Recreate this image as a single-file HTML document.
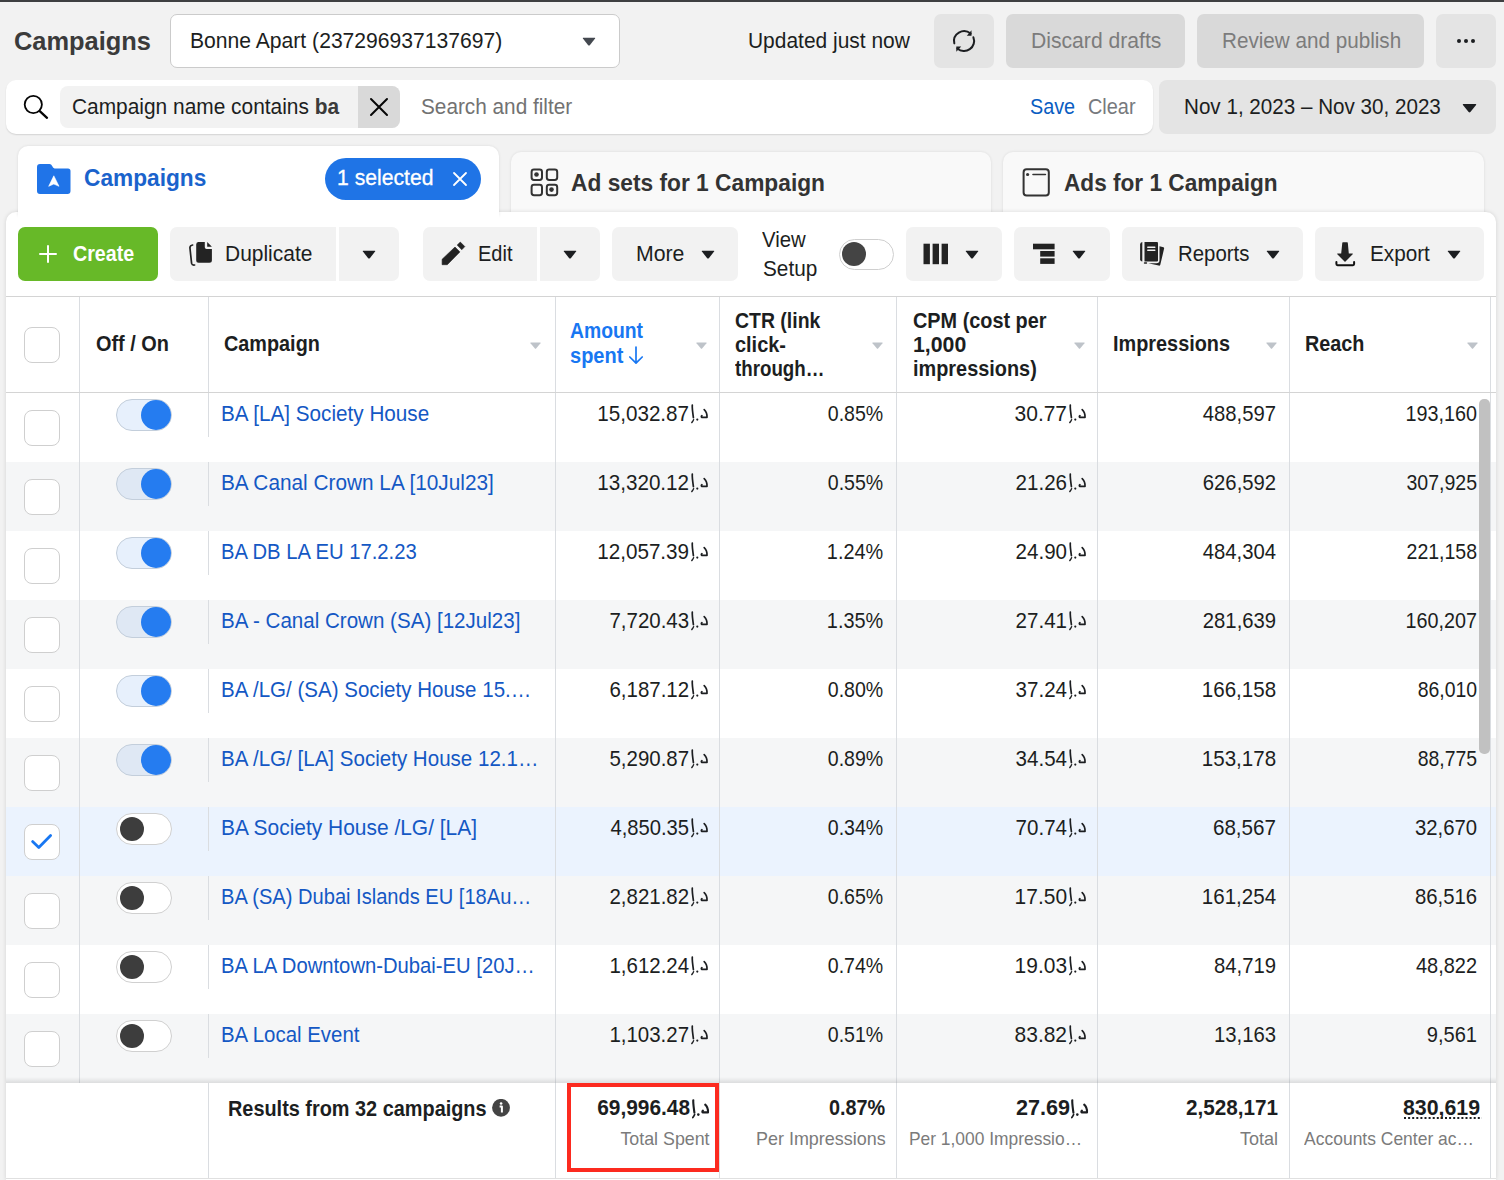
<!DOCTYPE html>
<html><head><meta charset="utf-8">
<style>
*{box-sizing:border-box;margin:0;padding:0}
html,body{width:1504px;height:1180px;overflow:hidden}
body{background:#f2f2f2;font-family:"Liberation Sans",sans-serif;color:#1c1e21;position:relative}
.a{position:absolute}
.t{position:absolute;white-space:nowrap;line-height:1}
</style></head>
<body>
<div class="a" style="left:0px;top:0px;width:1504px;height:2px;background:#3e3f41;border-radius:0px"></div>
<div id="taa25918f" class="t" style="top:28.07px;left:14.20px;font-size:26.5px;font-weight:bold;color:#3b3b3b;transform:scaleX(0.9590);transform-origin:left">Campaigns</div>
<div class="a" style="left:170px;top:14px;width:450px;height:54px;background:#fff;border-radius:7px;border:1px solid #cbcbcb"></div>
<div id="tb012c9fb" class="t" style="top:29.52px;left:189.50px;font-size:21.6px;font-weight:normal;color:#1c1e21;transform:scaleX(0.9779);transform-origin:left">Bonne Apart (237296937137697)</div>
<svg class="a" style="left:582px;top:37px" width="14" height="9" viewBox="0 0 14 9"><path d="M1.2 0.8 H12.8 Q13.6 0.8 13.1 1.6 L7.8 8.2 Q7 9 6.2 8.2 L0.9 1.6 Q0.4 0.8 1.2 0.8Z" fill="#444950"/></svg>
<div id="t24e36e07" class="t" style="top:29.52px;left:748.00px;font-size:21.6px;font-weight:normal;color:#1c1e21;transform:scaleX(0.9699);transform-origin:left">Updated just now</div>
<div class="a" style="left:934px;top:14px;width:60px;height:54px;background:#e4e4e4;border-radius:7px"></div>
<svg class="a" style="left:950px;top:27px" width="28" height="28" viewBox="0 0 28 28"><path d="M4.3 16.4 A10 10 0 0 1 20.6 6.6" stroke="#1c1e21" stroke-width="2" fill="none" stroke-linecap="round"/><path d="M23.4 10.3 A10 10 0 0 1 7.4 21.4" stroke="#1c1e21" stroke-width="2" fill="none" stroke-linecap="round"/><path d="M21.5 3.3 V8.7 H16.8 Z" fill="#1c1e21"/><path d="M6.3 24.8 V19.4 H11.2 Z" fill="#1c1e21"/></svg>
<div class="a" style="left:1006px;top:14px;width:179px;height:54px;background:#d9d9d9;border-radius:7px"></div>
<div id="tb65f2db2" class="t" style="top:29.62px;left:1030.70px;font-size:21.6px;font-weight:normal;color:#7c7c7c;transform:scaleX(0.9788);transform-origin:left">Discard drafts</div>
<div class="a" style="left:1197px;top:14px;width:227px;height:54px;background:#d9d9d9;border-radius:7px"></div>
<div id="te1158c4f" class="t" style="top:29.62px;left:1222.00px;font-size:21.6px;font-weight:normal;color:#7c7c7c;transform:scaleX(0.9568);transform-origin:left">Review and publish</div>
<div class="a" style="left:1436px;top:14px;width:60px;height:54px;background:#e4e4e4;border-radius:7px"></div>
<div class="a" style="left:1457px;top:39px;width:4px;height:4px;border-radius:2px;background:#1c1e21"></div>
<div class="a" style="left:1464px;top:39px;width:4px;height:4px;border-radius:2px;background:#1c1e21"></div>
<div class="a" style="left:1471px;top:39px;width:4px;height:4px;border-radius:2px;background:#1c1e21"></div>
<div class="a" style="left:6px;top:80px;width:1147px;height:54px;background:#fff;border-radius:10px;box-shadow:0 1px 1.5px rgba(0,0,0,0.13)"></div>
<svg class="a" style="left:20px;top:92px" width="32" height="30" viewBox="0 0 32 30"><circle cx="13.3" cy="12.5" r="8.6" stroke="#050505" stroke-width="1.8" fill="none"/><path d="M20 19.3 L27 25.8" stroke="#050505" stroke-width="2.3" stroke-linecap="round"/></svg>
<div class="a" style="left:60px;top:86px;width:340px;height:42px;background:#f2f2f2;border-radius:8px"></div>
<div class="a" style="left:358px;top:86px;width:42px;height:42px;background:#d9d9d9;border-radius:0 8px 8px 0"></div>
<svg class="a" style="left:368px;top:96px" width="22" height="22" viewBox="0 0 22 22"><path d="M3 3 L19 19 M19 3 L3 19" stroke="#050505" stroke-width="2" stroke-linecap="round"/></svg>
<div id="t584254b4" class="t" style="top:95.72px;left:72.40px;font-size:21.6px;font-weight:normal;color:#1c1e21;transform:scaleX(0.9674);transform-origin:left">Campaign name contains <b style="color:#3b3b3b">ba</b></div>
<div id="tb4aa1574" class="t" style="top:95.72px;left:421.00px;font-size:21.6px;font-weight:normal;color:#727272;transform:scaleX(0.9617);transform-origin:left">Search and filter</div>
<div id="ta5e28c8b" class="t" style="top:95.82px;left:1030.00px;font-size:21.6px;font-weight:normal;color:#0a5dc2;transform:scaleX(0.9167);transform-origin:left">Save</div>
<div id="t46871923" class="t" style="top:95.82px;left:1087.50px;font-size:21.6px;font-weight:normal;color:#76797d;transform:scaleX(0.9216);transform-origin:left">Clear</div>
<div class="a" style="left:1159px;top:80px;width:337px;height:54px;background:#e4e4e4;border-radius:8px"></div>
<div id="te5a3c46e" class="t" style="top:95.72px;left:1183.50px;font-size:21.6px;font-weight:normal;color:#1c1e21;transform:scaleX(0.9551);transform-origin:left">Nov 1, 2023 – Nov 30, 2023</div>
<svg class="a" style="left:1461.5px;top:102.5px" width="15" height="10" viewBox="0 0 14 9"><path d="M1.2 0.8 H12.8 Q13.6 0.8 13.1 1.6 L7.8 8.2 Q7 9 6.2 8.2 L0.9 1.6 Q0.4 0.8 1.2 0.8Z" fill="#1c1e21"/></svg>
<div class="a" style="left:511px;top:152px;width:480px;height:70px;background:#f9f9f9;border-radius:10px 10px 0 0;box-shadow:0 0 3px rgba(0,0,0,0.10)"></div>
<div class="a" style="left:1003px;top:152px;width:481px;height:70px;background:#f9f9f9;border-radius:10px 10px 0 0;box-shadow:0 0 3px rgba(0,0,0,0.10)"></div>
<div class="a" style="left:6px;top:212px;width:1490px;height:968px;background:#fff;border-radius:10px 10px 0 0;box-shadow:0 0 4px rgba(0,0,0,0.13)"></div>
<div class="a" style="left:18px;top:146px;width:481px;height:70px;background:#fff;border-radius:10px 10px 0 0;box-shadow:0 0 3px rgba(0,0,0,0.10)"></div>
<div class="a" style="left:18px;top:200px;width:481px;height:26px;background:#fff;border-radius:0px"></div>
<svg class="a" style="left:37px;top:164px" width="34" height="30" viewBox="0 0 34 30"><path d="M3 0 H12.5 Q14.3 0 15.2 2 L16 3.6 Q16.6 4.4 17.6 4.4 H31 Q33.5 4.4 33.5 7 V27 Q33.5 30 30.5 30 H3 Q0 30 0 27 V3 Q0 0 3 0Z" fill="#2074e8"/><path d="M16.8 11.8 L22 22.3 L16.8 20 L11.7 22.3Z" fill="#fff" stroke="#fff" stroke-width="0.6" stroke-linejoin="round"/></svg>
<div id="tc4a36402" class="t" style="top:166.38px;left:84.00px;font-size:24px;font-weight:bold;color:#1a63cc;transform:scaleX(0.9453);transform-origin:left">Campaigns</div>
<div class="a" style="left:325px;top:158px;width:156px;height:41.5px;background:#1f74e6;border-radius:21px"></div>
<div id="ta44075b0" class="t" style="top:167.32px;left:337.00px;font-size:21.6px;font-weight:normal;color:#fff;transform:scaleX(0.9797);transform-origin:left;-webkit-text-stroke:0.3px #fff">1 selected</div>
<svg class="a" style="left:451px;top:170px" width="18" height="18" viewBox="0 0 18 18"><path d="M3 3 L15 15 M15 3 L3 15" stroke="#fff" stroke-width="1.8" stroke-linecap="round"/></svg>
<svg class="a" style="left:528px;top:166px" width="32" height="32" viewBox="0 0 32 32"><rect x="3.6" y="3.6" width="10.4" height="10.4" rx="2.4" stroke="#333" stroke-width="2" fill="none"/><rect x="18.8" y="3.6" width="10.4" height="10.4" rx="2.4" stroke="#333" stroke-width="2" fill="none"/><rect x="3.6" y="18.8" width="10.4" height="10.4" rx="2.4" stroke="#333" stroke-width="2" fill="none"/><rect x="18.8" y="18.8" width="10.4" height="10.4" rx="2.4" stroke="#333" stroke-width="2" fill="none"/><circle cx="8.5" cy="8.5" r="2.3" fill="#333"/><circle cx="23.5" cy="23.6" r="2.3" fill="#333"/></svg>
<div id="t94a41b3c" class="t" style="top:170.68px;left:571.00px;font-size:24px;font-weight:bold;color:#333333;transform:scaleX(0.9476);transform-origin:left">Ad sets for 1 Campaign</div>
<svg class="a" style="left:1020px;top:166px" width="32" height="32" viewBox="0 0 32 32"><rect x="3.6" y="3.2" width="25.2" height="26.2" rx="3" stroke="#333" stroke-width="2" fill="none"/><circle cx="7.6" cy="8.5" r="1.6" fill="#333"/><path d="M13 8.5 H25.4" stroke="#333" stroke-width="1.6" stroke-linecap="round"/></svg>
<div id="tc7b79ae1" class="t" style="top:170.68px;left:1063.50px;font-size:24px;font-weight:bold;color:#333333;transform:scaleX(0.9423);transform-origin:left">Ads for 1 Campaign</div>
<div class="a" style="left:18px;top:227px;width:140px;height:54px;background:#67b928;border-radius:7px"></div>
<svg class="a" style="left:38px;top:244px" width="20" height="20" viewBox="0 0 20 20"><path d="M10 2 V18 M2 10 H18" stroke="#fff" stroke-width="2" stroke-linecap="round"/></svg>
<div id="t2d208cb6" class="t" style="top:242.62px;left:72.80px;font-size:21.6px;font-weight:bold;color:#fff;transform:scaleX(0.9104);transform-origin:left">Create</div>
<div class="a" style="left:170px;top:227px;width:166px;height:54px;background:#f2f2f2;border-radius:7px 0 0 7px"></div>
<div class="a" style="left:339px;top:227px;width:60px;height:54px;background:#f2f2f2;border-radius:0 7px 7px 0"></div>
<svg class="a" style="left:186px;top:240px" width="28" height="28" viewBox="0 0 28 28"><path d="M12.2 2 H18.8 V7.2 Q18.8 9 20.6 9 H25.9 V20.2 Q25.9 22.7 23.4 22.7 H12.7 Q10.2 22.7 10.2 20.2 V4.5 Q10.2 2 12.2 2Z" fill="#232323"/><path d="M21.2 2 L25.9 6.7 H21.2Z" fill="#232323"/><path d="M6.6 5 Q4.2 5.4 3.9 7.6 L5.6 23.4 Q6.1 25.4 8.6 25" stroke="#232323" stroke-width="1.7" fill="none" stroke-linecap="round"/></svg>
<div id="ta1fe7149" class="t" style="top:242.62px;left:225.40px;font-size:21.6px;font-weight:normal;color:#1c1e21;transform:scaleX(0.9708);transform-origin:left">Duplicate</div>
<svg class="a" style="left:362px;top:250px" width="14" height="9" viewBox="0 0 14 9"><path d="M1.2 0.8 H12.8 Q13.6 0.8 13.1 1.6 L7.8 8.2 Q7 9 6.2 8.2 L0.9 1.6 Q0.4 0.8 1.2 0.8Z" fill="#1c1e21"/></svg>
<div class="a" style="left:423px;top:227px;width:114px;height:54px;background:#f2f2f2;border-radius:7px 0 0 7px"></div>
<div class="a" style="left:540px;top:227px;width:60px;height:54px;background:#f2f2f2;border-radius:0 7px 7px 0"></div>
<svg class="a" style="left:440px;top:240px" width="28" height="28" viewBox="0 0 28 28"><path d="M2.1 19.3 L15 7 L19.9 11.9 L7.3 24.7 H2.1Z" fill="#232323" stroke="#232323" stroke-width="0.6" stroke-linejoin="round"/><path d="M20.3 2.1 L24.8 6.6 L21.8 9.7 L17.2 5.1Z" fill="#232323" stroke="#232323" stroke-width="0.6" stroke-linejoin="round"/></svg>
<div id="t60945b00" class="t" style="top:242.62px;left:478.00px;font-size:21.6px;font-weight:normal;color:#1c1e21;transform:scaleX(0.9260);transform-origin:left">Edit</div>
<svg class="a" style="left:562.6px;top:250px" width="14" height="9" viewBox="0 0 14 9"><path d="M1.2 0.8 H12.8 Q13.6 0.8 13.1 1.6 L7.8 8.2 Q7 9 6.2 8.2 L0.9 1.6 Q0.4 0.8 1.2 0.8Z" fill="#1c1e21"/></svg>
<div class="a" style="left:612px;top:227px;width:125.5px;height:54px;background:#f2f2f2;border-radius:7px"></div>
<div id="tb323ca93" class="t" style="top:242.62px;left:636.00px;font-size:21.6px;font-weight:normal;color:#1c1e21;transform:scaleX(0.9844);transform-origin:left">More</div>
<svg class="a" style="left:700.5px;top:250px" width="14" height="9" viewBox="0 0 14 9"><path d="M1.2 0.8 H12.8 Q13.6 0.8 13.1 1.6 L7.8 8.2 Q7 9 6.2 8.2 L0.9 1.6 Q0.4 0.8 1.2 0.8Z" fill="#1c1e21"/></svg>
<div id="tbd871097" class="t" style="top:228.72px;left:762.20px;font-size:21.6px;font-weight:normal;color:#1c1e21;transform:scaleX(0.9414);transform-origin:left">View</div>
<div id="t5d36d2b4" class="t" style="top:258.22px;left:762.50px;font-size:21.6px;font-weight:normal;color:#1c1e21;transform:scaleX(0.9617);transform-origin:left">Setup</div>
<div class="a" style="left:838.5px;top:238.5px;width:55px;height:31px;border-radius:16px;background:#fff;border:1px solid #cfcfcf"></div>
<div class="a" style="left:842px;top:242px;width:24px;height:24px;border-radius:12px;background:#444"></div>
<div class="a" style="left:906px;top:227px;width:95.5px;height:54px;background:#f2f2f2;border-radius:7px"></div>
<svg class="a" style="left:923px;top:243px" width="26" height="22" viewBox="0 0 26 22"><rect x="0.5" y="0.7" width="6.4" height="20.5" fill="#232323"/><rect x="9.6" y="0.7" width="6.4" height="20.5" fill="#232323"/><rect x="18.6" y="0.7" width="6.4" height="20.5" fill="#232323"/></svg>
<svg class="a" style="left:965px;top:250px" width="14" height="9" viewBox="0 0 14 9"><path d="M1.2 0.8 H12.8 Q13.6 0.8 13.1 1.6 L7.8 8.2 Q7 9 6.2 8.2 L0.9 1.6 Q0.4 0.8 1.2 0.8Z" fill="#1c1e21"/></svg>
<div class="a" style="left:1014px;top:227px;width:95.5px;height:54px;background:#f2f2f2;border-radius:7px"></div>
<svg class="a" style="left:1032px;top:243px" width="24" height="22" viewBox="0 0 24 22"><rect x="1" y="0.7" width="21.6" height="5.6" fill="#232323"/><rect x="8.2" y="8" width="14.4" height="5.6" fill="#232323"/><rect x="8.2" y="15.3" width="14.4" height="5.6" fill="#232323"/></svg>
<svg class="a" style="left:1072px;top:250px" width="14" height="9" viewBox="0 0 14 9"><path d="M1.2 0.8 H12.8 Q13.6 0.8 13.1 1.6 L7.8 8.2 Q7 9 6.2 8.2 L0.9 1.6 Q0.4 0.8 1.2 0.8Z" fill="#1c1e21"/></svg>
<div class="a" style="left:1122px;top:227px;width:181px;height:54px;background:#f2f2f2;border-radius:7px"></div>
<svg class="a" style="left:1136px;top:238px" width="30" height="30" viewBox="0 0 30 30"><path d="M6.3 4 V23.5 Q4.3 23.3 4.1 21.4 V6.2 Q4.3 4.2 6.3 4Z" fill="#232323"/><path d="M8.5 4 H21 Q22 4 22 5.2 V22.5 Q22 23.5 21 23.5 H8.5Z" fill="#232323"/><path d="M11.8 9.3 H18.8 M11.8 12.2 H18.8" stroke="#f2f2f2" stroke-width="1.5" stroke-linecap="round"/><path d="M23.5 8.2 L27.5 9.2 Q28.4 9.6 28.1 10.6 L24.3 26.8 Q23.8 27.9 22.7 27.6 L12.2 25.3 H20.5 Q23.5 25.3 23.5 22.3Z" fill="#232323"/><path d="M8.5 25 H10.5" stroke="#232323" stroke-width="1.4" stroke-linecap="round"/></svg>
<div id="tfb6ac328" class="t" style="top:242.62px;left:1177.60px;font-size:21.6px;font-weight:normal;color:#1c1e21;transform:scaleX(0.9437);transform-origin:left">Reports</div>
<svg class="a" style="left:1266px;top:250px" width="14" height="9" viewBox="0 0 14 9"><path d="M1.2 0.8 H12.8 Q13.6 0.8 13.1 1.6 L7.8 8.2 Q7 9 6.2 8.2 L0.9 1.6 Q0.4 0.8 1.2 0.8Z" fill="#1c1e21"/></svg>
<div class="a" style="left:1315px;top:227px;width:169px;height:54px;background:#f2f2f2;border-radius:7px"></div>
<svg class="a" style="left:1332px;top:238px" width="26" height="30" viewBox="0 0 26 30"><path d="M10.9 4.2 H15.2 Q15.7 4.2 15.8 4.8 L16.8 15.5 H20.4 Q21.2 15.6 20.7 16.3 L13.5 23.5 Q13 24 12.5 23.5 L5.3 16.3 Q4.8 15.6 5.6 15.5 H9.2 L10.3 4.8 Q10.4 4.2 10.9 4.2Z" fill="#232323"/><path d="M4.4 23.9 V26.1 Q4.4 27.2 5.5 27.2 H21 Q22.1 27.2 22.1 26.1 V23.9" stroke="#111" stroke-width="2" fill="none" stroke-linecap="round"/></svg>
<div id="t9ee970e2" class="t" style="top:242.62px;left:1370.00px;font-size:21.6px;font-weight:normal;color:#1c1e21;transform:scaleX(0.9588);transform-origin:left">Export</div>
<svg class="a" style="left:1447px;top:250px" width="14" height="9" viewBox="0 0 14 9"><path d="M1.2 0.8 H12.8 Q13.6 0.8 13.1 1.6 L7.8 8.2 Q7 9 6.2 8.2 L0.9 1.6 Q0.4 0.8 1.2 0.8Z" fill="#1c1e21"/></svg>
<div class="a" style="left:6px;top:296px;width:1490px;height:1px;background:#d4d4d4;border-radius:0px"></div>
<div class="a" style="left:6px;top:392px;width:1490px;height:1px;background:#d4d4d4;border-radius:0px"></div>
<div class="a" style="left:79px;top:297px;width:1px;height:95px;background:#dadde1;border-radius:0px"></div>
<div class="a" style="left:208px;top:297px;width:1px;height:95px;background:#dadde1;border-radius:0px"></div>
<div class="a" style="left:555px;top:297px;width:1px;height:95px;background:#dadde1;border-radius:0px"></div>
<div class="a" style="left:719px;top:297px;width:1px;height:95px;background:#dadde1;border-radius:0px"></div>
<div class="a" style="left:896px;top:297px;width:1px;height:95px;background:#dadde1;border-radius:0px"></div>
<div class="a" style="left:1097px;top:297px;width:1px;height:95px;background:#dadde1;border-radius:0px"></div>
<div class="a" style="left:1289px;top:297px;width:1px;height:95px;background:#dadde1;border-radius:0px"></div>
<div class="a" style="left:1490px;top:297px;width:1px;height:95px;background:#dadde1;border-radius:0px"></div>
<div class="a" style="left:24.2px;top:327px;width:35.5px;height:35.5px;border-radius:8px;background:#fff;border:1px solid #cfcfcf"></div>
<div id="t915b5547" class="t" style="top:334.20px;left:95.80px;font-size:21.5px;font-weight:bold;color:#1c1e21;transform:scaleX(0.9260);transform-origin:left">Off / On</div>
<div id="tcd2b1657" class="t" style="top:334.40px;left:224.00px;font-size:21.5px;font-weight:bold;color:#1c1e21;transform:scaleX(0.9223);transform-origin:left">Campaign</div>
<svg class="a" style="left:530px;top:342.3px" width="11" height="7" viewBox="0 0 11 7"><path d="M0.8 0.5 H10.2 Q11 0.5 10.5 1.2 L6.1 6.4 Q5.5 7 4.9 6.4 L0.5 1.2 Q0 0.5 0.8 0.5Z" fill="#bec3c9"/></svg>
<div id="ta868b68b" class="t" style="top:320.90px;left:570.30px;font-size:21.5px;font-weight:bold;color:#1877f2;transform:scaleX(0.8992);transform-origin:left">Amount</div>
<div id="t5782e64c" class="t" style="top:345.50px;left:570.30px;font-size:21.5px;font-weight:bold;color:#1877f2;transform:scaleX(0.9308);transform-origin:left">spent</div>
<svg class="a" style="left:627.5px;top:346px" width="16" height="19" viewBox="0 0 16 19"><path d="M8 1 V17 M1.8 11 L8 17.2 L14.2 11" stroke="#1877f2" stroke-width="1.7" fill="none" stroke-linecap="round" stroke-linejoin="round"/></svg>
<svg class="a" style="left:695.9px;top:342.3px" width="11" height="7" viewBox="0 0 11 7"><path d="M0.8 0.5 H10.2 Q11 0.5 10.5 1.2 L6.1 6.4 Q5.5 7 4.9 6.4 L0.5 1.2 Q0 0.5 0.8 0.5Z" fill="#bec3c9"/></svg>
<div id="t7d94825a" class="t" style="top:311.00px;left:735.30px;font-size:21.5px;font-weight:bold;color:#1c1e21;transform:scaleX(0.9044);transform-origin:left">CTR (link</div>
<div id="t5403bf91" class="t" style="top:335.00px;left:735.30px;font-size:21.5px;font-weight:bold;color:#1c1e21;transform:scaleX(0.9263);transform-origin:left">click-</div>
<div id="t73893766" class="t" style="top:358.60px;left:735.30px;font-size:21.5px;font-weight:bold;color:#1c1e21;transform:scaleX(0.8713);transform-origin:left">through…</div>
<svg class="a" style="left:872px;top:342.3px" width="11" height="7" viewBox="0 0 11 7"><path d="M0.8 0.5 H10.2 Q11 0.5 10.5 1.2 L6.1 6.4 Q5.5 7 4.9 6.4 L0.5 1.2 Q0 0.5 0.8 0.5Z" fill="#bec3c9"/></svg>
<div id="ta5e9a7d2" class="t" style="top:311.00px;left:912.50px;font-size:21.5px;font-weight:bold;color:#1c1e21;transform:scaleX(0.9237);transform-origin:left">CPM (cost per</div>
<div id="t007a6642" class="t" style="top:335.00px;left:912.50px;font-size:21.5px;font-weight:bold;color:#1c1e21;transform:scaleX(0.9899);transform-origin:left">1,000</div>
<div id="t1e9acbd8" class="t" style="top:358.60px;left:912.50px;font-size:21.5px;font-weight:bold;color:#1c1e21;transform:scaleX(0.9249);transform-origin:left">impressions)</div>
<svg class="a" style="left:1073.5px;top:342.3px" width="11" height="7" viewBox="0 0 11 7"><path d="M0.8 0.5 H10.2 Q11 0.5 10.5 1.2 L6.1 6.4 Q5.5 7 4.9 6.4 L0.5 1.2 Q0 0.5 0.8 0.5Z" fill="#bec3c9"/></svg>
<div id="t10adb4b2" class="t" style="top:334.00px;left:1113.40px;font-size:21.5px;font-weight:bold;color:#1c1e21;transform:scaleX(0.9240);transform-origin:left">Impressions</div>
<svg class="a" style="left:1265.5px;top:342.3px" width="11" height="7" viewBox="0 0 11 7"><path d="M0.8 0.5 H10.2 Q11 0.5 10.5 1.2 L6.1 6.4 Q5.5 7 4.9 6.4 L0.5 1.2 Q0 0.5 0.8 0.5Z" fill="#bec3c9"/></svg>
<div id="t9f319165" class="t" style="top:334.00px;left:1305.00px;font-size:21.5px;font-weight:bold;color:#1c1e21;transform:scaleX(0.9206);transform-origin:left">Reach</div>
<svg class="a" style="left:1466.5px;top:342.3px" width="11" height="7" viewBox="0 0 11 7"><path d="M0.8 0.5 H10.2 Q11 0.5 10.5 1.2 L6.1 6.4 Q5.5 7 4.9 6.4 L0.5 1.2 Q0 0.5 0.8 0.5Z" fill="#bec3c9"/></svg>
<div class="a" style="left:6px;top:393px;width:1490px;height:69px;background:#ffffff;border-radius:0px"></div>
<div class="a" style="left:79px;top:393px;width:1px;height:69px;background:#dadde1;border-radius:0px"></div>
<div class="a" style="left:208px;top:393px;width:1px;height:44px;background:#dadde1;border-radius:0px"></div>
<div class="a" style="left:555px;top:393px;width:1px;height:69px;background:#dadde1;border-radius:0px"></div>
<div class="a" style="left:719px;top:393px;width:1px;height:69px;background:#dadde1;border-radius:0px"></div>
<div class="a" style="left:896px;top:393px;width:1px;height:69px;background:#dadde1;border-radius:0px"></div>
<div class="a" style="left:1097px;top:393px;width:1px;height:69px;background:#dadde1;border-radius:0px"></div>
<div class="a" style="left:1289px;top:393px;width:1px;height:69px;background:#dadde1;border-radius:0px"></div>
<div class="a" style="left:1490px;top:393px;width:1px;height:69px;background:#dadde1;border-radius:0px"></div>
<div class="a" style="left:24.2px;top:410px;width:35.5px;height:35.5px;border-radius:8px;background:#fff;border:1px solid #cfcfcf"></div>
<div class="a" style="left:116px;top:399px;width:55.5px;height:31.5px;border-radius:16px;background:#e7f0fc;border:1px solid #c3cedb"></div>
<div class="a" style="left:141px;top:399.5px;width:30px;height:30px;border-radius:15px;background:#257cf0"></div>
<div id="t7497a904" class="t" style="top:402.72px;left:221.00px;font-size:21.6px;font-weight:normal;color:#1458c4;transform:scaleX(0.9583);transform-origin:left">BA [LA] Society House</div>
<div id="t41259e73" class="t" style="top:402.72px;right:814.80px;font-size:21.6px;font-weight:normal;color:#1c1e21;transform:scaleX(0.9561);transform-origin:right">15,032.87</div>
<svg class="a" style="left:690.5px;top:404.0px" width="18" height="22" viewBox="0 0 18 22"><path d="M1.3 1.2 C1.1 3 1.6 8 2.4 13.6" stroke="#1c1e21" stroke-width="1.7" fill="none" stroke-linecap="round"/><path d="M2.6 15.6 C2.2 16.8 1.5 17.6 0.8 18.6" stroke="#1c1e21" stroke-width="1.4" fill="none" stroke-linecap="round"/><circle cx="6.3" cy="15.6" r="1.1" fill="#1c1e21"/><path d="M13.2 5.6 C15.4 7.6 16.2 10 16 13.4 L10.6 13.4 C10.2 12.8 10.3 12 10.9 11.6" stroke="#1c1e21" stroke-width="1.7" fill="none" stroke-linecap="round" stroke-linejoin="round"/></svg>
<div id="t2dbe47bd" class="t" style="top:402.72px;right:621.00px;font-size:21.6px;font-weight:normal;color:#1c1e21;transform:scaleX(0.9055);transform-origin:right">0.85%</div>
<div id="t10940870" class="t" style="top:402.72px;right:436.70px;font-size:21.6px;font-weight:normal;color:#1c1e21;transform:scaleX(0.9713);transform-origin:right">30.77</div>
<svg class="a" style="left:1068.5px;top:404.0px" width="18" height="22" viewBox="0 0 18 22"><path d="M1.3 1.2 C1.1 3 1.6 8 2.4 13.6" stroke="#1c1e21" stroke-width="1.7" fill="none" stroke-linecap="round"/><path d="M2.6 15.6 C2.2 16.8 1.5 17.6 0.8 18.6" stroke="#1c1e21" stroke-width="1.4" fill="none" stroke-linecap="round"/><circle cx="6.3" cy="15.6" r="1.1" fill="#1c1e21"/><path d="M13.2 5.6 C15.4 7.6 16.2 10 16 13.4 L10.6 13.4 C10.2 12.8 10.3 12 10.9 11.6" stroke="#1c1e21" stroke-width="1.7" fill="none" stroke-linecap="round" stroke-linejoin="round"/></svg>
<div id="td9ce9e4d" class="t" style="top:402.72px;right:227.60px;font-size:21.6px;font-weight:normal;color:#1c1e21;transform:scaleX(0.9389);transform-origin:right">488,597</div>
<div id="te6055fb4" class="t" style="top:402.72px;right:27.00px;font-size:21.6px;font-weight:normal;color:#1c1e21;transform:scaleX(0.9154);transform-origin:right">193,160</div>
<div class="a" style="left:6px;top:462px;width:1490px;height:69px;background:#f5f6f7;border-radius:0px"></div>
<div class="a" style="left:79px;top:462px;width:1px;height:69px;background:#dadde1;border-radius:0px"></div>
<div class="a" style="left:208px;top:462px;width:1px;height:44px;background:#dadde1;border-radius:0px"></div>
<div class="a" style="left:555px;top:462px;width:1px;height:69px;background:#dadde1;border-radius:0px"></div>
<div class="a" style="left:719px;top:462px;width:1px;height:69px;background:#dadde1;border-radius:0px"></div>
<div class="a" style="left:896px;top:462px;width:1px;height:69px;background:#dadde1;border-radius:0px"></div>
<div class="a" style="left:1097px;top:462px;width:1px;height:69px;background:#dadde1;border-radius:0px"></div>
<div class="a" style="left:1289px;top:462px;width:1px;height:69px;background:#dadde1;border-radius:0px"></div>
<div class="a" style="left:1490px;top:462px;width:1px;height:69px;background:#dadde1;border-radius:0px"></div>
<div class="a" style="left:24.2px;top:479px;width:35.5px;height:35.5px;border-radius:8px;background:#fff;border:1px solid #cfcfcf"></div>
<div class="a" style="left:116px;top:468px;width:55.5px;height:31.5px;border-radius:16px;background:#dfe8f4;border:1px solid #c3cedb"></div>
<div class="a" style="left:141px;top:468.5px;width:30px;height:30px;border-radius:15px;background:#257cf0"></div>
<div id="tebf5dec6" class="t" style="top:471.72px;left:221.00px;font-size:21.6px;font-weight:normal;color:#1458c4;transform:scaleX(0.9630);transform-origin:left">BA Canal Crown LA [10Jul23]</div>
<div id="te239441a" class="t" style="top:471.72px;right:814.80px;font-size:21.6px;font-weight:normal;color:#1c1e21;transform:scaleX(0.9561);transform-origin:right">13,320.12</div>
<svg class="a" style="left:690.5px;top:473.0px" width="18" height="22" viewBox="0 0 18 22"><path d="M1.3 1.2 C1.1 3 1.6 8 2.4 13.6" stroke="#1c1e21" stroke-width="1.7" fill="none" stroke-linecap="round"/><path d="M2.6 15.6 C2.2 16.8 1.5 17.6 0.8 18.6" stroke="#1c1e21" stroke-width="1.4" fill="none" stroke-linecap="round"/><circle cx="6.3" cy="15.6" r="1.1" fill="#1c1e21"/><path d="M13.2 5.6 C15.4 7.6 16.2 10 16 13.4 L10.6 13.4 C10.2 12.8 10.3 12 10.9 11.6" stroke="#1c1e21" stroke-width="1.7" fill="none" stroke-linecap="round" stroke-linejoin="round"/></svg>
<div id="t305c2749" class="t" style="top:471.72px;right:621.00px;font-size:21.6px;font-weight:normal;color:#1c1e21;transform:scaleX(0.9055);transform-origin:right">0.55%</div>
<div id="tcc970a7a" class="t" style="top:471.72px;right:436.70px;font-size:21.6px;font-weight:normal;color:#1c1e21;transform:scaleX(0.9515);transform-origin:right">21.26</div>
<svg class="a" style="left:1068.5px;top:473.0px" width="18" height="22" viewBox="0 0 18 22"><path d="M1.3 1.2 C1.1 3 1.6 8 2.4 13.6" stroke="#1c1e21" stroke-width="1.7" fill="none" stroke-linecap="round"/><path d="M2.6 15.6 C2.2 16.8 1.5 17.6 0.8 18.6" stroke="#1c1e21" stroke-width="1.4" fill="none" stroke-linecap="round"/><circle cx="6.3" cy="15.6" r="1.1" fill="#1c1e21"/><path d="M13.2 5.6 C15.4 7.6 16.2 10 16 13.4 L10.6 13.4 C10.2 12.8 10.3 12 10.9 11.6" stroke="#1c1e21" stroke-width="1.7" fill="none" stroke-linecap="round" stroke-linejoin="round"/></svg>
<div id="t8bf44b84" class="t" style="top:471.72px;right:227.60px;font-size:21.6px;font-weight:normal;color:#1c1e21;transform:scaleX(0.9382);transform-origin:right">626,592</div>
<div id="t05a96a99" class="t" style="top:471.72px;right:27.00px;font-size:21.6px;font-weight:normal;color:#1c1e21;transform:scaleX(0.9041);transform-origin:right">307,925</div>
<div class="a" style="left:6px;top:531px;width:1490px;height:69px;background:#ffffff;border-radius:0px"></div>
<div class="a" style="left:79px;top:531px;width:1px;height:69px;background:#dadde1;border-radius:0px"></div>
<div class="a" style="left:208px;top:531px;width:1px;height:44px;background:#dadde1;border-radius:0px"></div>
<div class="a" style="left:555px;top:531px;width:1px;height:69px;background:#dadde1;border-radius:0px"></div>
<div class="a" style="left:719px;top:531px;width:1px;height:69px;background:#dadde1;border-radius:0px"></div>
<div class="a" style="left:896px;top:531px;width:1px;height:69px;background:#dadde1;border-radius:0px"></div>
<div class="a" style="left:1097px;top:531px;width:1px;height:69px;background:#dadde1;border-radius:0px"></div>
<div class="a" style="left:1289px;top:531px;width:1px;height:69px;background:#dadde1;border-radius:0px"></div>
<div class="a" style="left:1490px;top:531px;width:1px;height:69px;background:#dadde1;border-radius:0px"></div>
<div class="a" style="left:24.2px;top:548px;width:35.5px;height:35.5px;border-radius:8px;background:#fff;border:1px solid #cfcfcf"></div>
<div class="a" style="left:116px;top:537px;width:55.5px;height:31.5px;border-radius:16px;background:#e7f0fc;border:1px solid #c3cedb"></div>
<div class="a" style="left:141px;top:537.5px;width:30px;height:30px;border-radius:15px;background:#257cf0"></div>
<div id="t596648ef" class="t" style="top:540.72px;left:221.00px;font-size:21.6px;font-weight:normal;color:#1458c4;transform:scaleX(0.9372);transform-origin:left">BA DB LA EU 17.2.23</div>
<div id="t68496ca8" class="t" style="top:540.72px;right:814.80px;font-size:21.6px;font-weight:normal;color:#1c1e21;transform:scaleX(0.9561);transform-origin:right">12,057.39</div>
<svg class="a" style="left:690.5px;top:542.0px" width="18" height="22" viewBox="0 0 18 22"><path d="M1.3 1.2 C1.1 3 1.6 8 2.4 13.6" stroke="#1c1e21" stroke-width="1.7" fill="none" stroke-linecap="round"/><path d="M2.6 15.6 C2.2 16.8 1.5 17.6 0.8 18.6" stroke="#1c1e21" stroke-width="1.4" fill="none" stroke-linecap="round"/><circle cx="6.3" cy="15.6" r="1.1" fill="#1c1e21"/><path d="M13.2 5.6 C15.4 7.6 16.2 10 16 13.4 L10.6 13.4 C10.2 12.8 10.3 12 10.9 11.6" stroke="#1c1e21" stroke-width="1.7" fill="none" stroke-linecap="round" stroke-linejoin="round"/></svg>
<div id="t34c2289a" class="t" style="top:540.72px;right:621.00px;font-size:21.6px;font-weight:normal;color:#1c1e21;transform:scaleX(0.9206);transform-origin:right">1.24%</div>
<div id="tcefb7c2c" class="t" style="top:540.72px;right:436.70px;font-size:21.6px;font-weight:normal;color:#1c1e21;transform:scaleX(0.9515);transform-origin:right">24.90</div>
<svg class="a" style="left:1068.5px;top:542.0px" width="18" height="22" viewBox="0 0 18 22"><path d="M1.3 1.2 C1.1 3 1.6 8 2.4 13.6" stroke="#1c1e21" stroke-width="1.7" fill="none" stroke-linecap="round"/><path d="M2.6 15.6 C2.2 16.8 1.5 17.6 0.8 18.6" stroke="#1c1e21" stroke-width="1.4" fill="none" stroke-linecap="round"/><circle cx="6.3" cy="15.6" r="1.1" fill="#1c1e21"/><path d="M13.2 5.6 C15.4 7.6 16.2 10 16 13.4 L10.6 13.4 C10.2 12.8 10.3 12 10.9 11.6" stroke="#1c1e21" stroke-width="1.7" fill="none" stroke-linecap="round" stroke-linejoin="round"/></svg>
<div id="t62e4e837" class="t" style="top:540.72px;right:227.60px;font-size:21.6px;font-weight:normal;color:#1c1e21;transform:scaleX(0.9389);transform-origin:right">484,304</div>
<div id="t8b2350da" class="t" style="top:540.72px;right:27.00px;font-size:21.6px;font-weight:normal;color:#1c1e21;transform:scaleX(0.9030);transform-origin:right">221,158</div>
<div class="a" style="left:6px;top:600px;width:1490px;height:69px;background:#f5f6f7;border-radius:0px"></div>
<div class="a" style="left:79px;top:600px;width:1px;height:69px;background:#dadde1;border-radius:0px"></div>
<div class="a" style="left:208px;top:600px;width:1px;height:44px;background:#dadde1;border-radius:0px"></div>
<div class="a" style="left:555px;top:600px;width:1px;height:69px;background:#dadde1;border-radius:0px"></div>
<div class="a" style="left:719px;top:600px;width:1px;height:69px;background:#dadde1;border-radius:0px"></div>
<div class="a" style="left:896px;top:600px;width:1px;height:69px;background:#dadde1;border-radius:0px"></div>
<div class="a" style="left:1097px;top:600px;width:1px;height:69px;background:#dadde1;border-radius:0px"></div>
<div class="a" style="left:1289px;top:600px;width:1px;height:69px;background:#dadde1;border-radius:0px"></div>
<div class="a" style="left:1490px;top:600px;width:1px;height:69px;background:#dadde1;border-radius:0px"></div>
<div class="a" style="left:24.2px;top:617px;width:35.5px;height:35.5px;border-radius:8px;background:#fff;border:1px solid #cfcfcf"></div>
<div class="a" style="left:116px;top:606px;width:55.5px;height:31.5px;border-radius:16px;background:#dfe8f4;border:1px solid #c3cedb"></div>
<div class="a" style="left:141px;top:606.5px;width:30px;height:30px;border-radius:15px;background:#257cf0"></div>
<div id="t31a012fe" class="t" style="top:609.72px;left:221.00px;font-size:21.6px;font-weight:normal;color:#1458c4;transform:scaleX(0.9521);transform-origin:left">BA - Canal Crown (SA) [12Jul23]</div>
<div id="t85fae5a9" class="t" style="top:609.72px;right:814.80px;font-size:21.6px;font-weight:normal;color:#1c1e21;transform:scaleX(0.9471);transform-origin:right">7,720.43</div>
<svg class="a" style="left:690.5px;top:611.0px" width="18" height="22" viewBox="0 0 18 22"><path d="M1.3 1.2 C1.1 3 1.6 8 2.4 13.6" stroke="#1c1e21" stroke-width="1.7" fill="none" stroke-linecap="round"/><path d="M2.6 15.6 C2.2 16.8 1.5 17.6 0.8 18.6" stroke="#1c1e21" stroke-width="1.4" fill="none" stroke-linecap="round"/><circle cx="6.3" cy="15.6" r="1.1" fill="#1c1e21"/><path d="M13.2 5.6 C15.4 7.6 16.2 10 16 13.4 L10.6 13.4 C10.2 12.8 10.3 12 10.9 11.6" stroke="#1c1e21" stroke-width="1.7" fill="none" stroke-linecap="round" stroke-linejoin="round"/></svg>
<div id="tf061c42d" class="t" style="top:609.72px;right:621.00px;font-size:21.6px;font-weight:normal;color:#1c1e21;transform:scaleX(0.9206);transform-origin:right">1.35%</div>
<div id="t401b7467" class="t" style="top:609.72px;right:436.70px;font-size:21.6px;font-weight:normal;color:#1c1e21;transform:scaleX(0.9515);transform-origin:right">27.41</div>
<svg class="a" style="left:1068.5px;top:611.0px" width="18" height="22" viewBox="0 0 18 22"><path d="M1.3 1.2 C1.1 3 1.6 8 2.4 13.6" stroke="#1c1e21" stroke-width="1.7" fill="none" stroke-linecap="round"/><path d="M2.6 15.6 C2.2 16.8 1.5 17.6 0.8 18.6" stroke="#1c1e21" stroke-width="1.4" fill="none" stroke-linecap="round"/><circle cx="6.3" cy="15.6" r="1.1" fill="#1c1e21"/><path d="M13.2 5.6 C15.4 7.6 16.2 10 16 13.4 L10.6 13.4 C10.2 12.8 10.3 12 10.9 11.6" stroke="#1c1e21" stroke-width="1.7" fill="none" stroke-linecap="round" stroke-linejoin="round"/></svg>
<div id="tcf1b27c0" class="t" style="top:609.72px;right:227.60px;font-size:21.6px;font-weight:normal;color:#1c1e21;transform:scaleX(0.9382);transform-origin:right">281,639</div>
<div id="t333b4a50" class="t" style="top:609.72px;right:27.00px;font-size:21.6px;font-weight:normal;color:#1c1e21;transform:scaleX(0.9154);transform-origin:right">160,207</div>
<div class="a" style="left:6px;top:669px;width:1490px;height:69px;background:#ffffff;border-radius:0px"></div>
<div class="a" style="left:79px;top:669px;width:1px;height:69px;background:#dadde1;border-radius:0px"></div>
<div class="a" style="left:208px;top:669px;width:1px;height:44px;background:#dadde1;border-radius:0px"></div>
<div class="a" style="left:555px;top:669px;width:1px;height:69px;background:#dadde1;border-radius:0px"></div>
<div class="a" style="left:719px;top:669px;width:1px;height:69px;background:#dadde1;border-radius:0px"></div>
<div class="a" style="left:896px;top:669px;width:1px;height:69px;background:#dadde1;border-radius:0px"></div>
<div class="a" style="left:1097px;top:669px;width:1px;height:69px;background:#dadde1;border-radius:0px"></div>
<div class="a" style="left:1289px;top:669px;width:1px;height:69px;background:#dadde1;border-radius:0px"></div>
<div class="a" style="left:1490px;top:669px;width:1px;height:69px;background:#dadde1;border-radius:0px"></div>
<div class="a" style="left:24.2px;top:686px;width:35.5px;height:35.5px;border-radius:8px;background:#fff;border:1px solid #cfcfcf"></div>
<div class="a" style="left:116px;top:675px;width:55.5px;height:31.5px;border-radius:16px;background:#e7f0fc;border:1px solid #c3cedb"></div>
<div class="a" style="left:141px;top:675.5px;width:30px;height:30px;border-radius:15px;background:#257cf0"></div>
<div id="t3ba3d7cb" class="t" style="top:678.72px;left:221.00px;font-size:21.6px;font-weight:normal;color:#1458c4;transform:scaleX(0.9505);transform-origin:left">BA /LG/ (SA) Society House 15.…</div>
<div id="tfa165b82" class="t" style="top:678.72px;right:814.80px;font-size:21.6px;font-weight:normal;color:#1c1e21;transform:scaleX(0.9471);transform-origin:right">6,187.12</div>
<svg class="a" style="left:690.5px;top:680.0px" width="18" height="22" viewBox="0 0 18 22"><path d="M1.3 1.2 C1.1 3 1.6 8 2.4 13.6" stroke="#1c1e21" stroke-width="1.7" fill="none" stroke-linecap="round"/><path d="M2.6 15.6 C2.2 16.8 1.5 17.6 0.8 18.6" stroke="#1c1e21" stroke-width="1.4" fill="none" stroke-linecap="round"/><circle cx="6.3" cy="15.6" r="1.1" fill="#1c1e21"/><path d="M13.2 5.6 C15.4 7.6 16.2 10 16 13.4 L10.6 13.4 C10.2 12.8 10.3 12 10.9 11.6" stroke="#1c1e21" stroke-width="1.7" fill="none" stroke-linecap="round" stroke-linejoin="round"/></svg>
<div id="tccc8cba5" class="t" style="top:678.72px;right:621.00px;font-size:21.6px;font-weight:normal;color:#1c1e21;transform:scaleX(0.9055);transform-origin:right">0.80%</div>
<div id="tb324254b" class="t" style="top:678.72px;right:436.70px;font-size:21.6px;font-weight:normal;color:#1c1e21;transform:scaleX(0.9515);transform-origin:right">37.24</div>
<svg class="a" style="left:1068.5px;top:680.0px" width="18" height="22" viewBox="0 0 18 22"><path d="M1.3 1.2 C1.1 3 1.6 8 2.4 13.6" stroke="#1c1e21" stroke-width="1.7" fill="none" stroke-linecap="round"/><path d="M2.6 15.6 C2.2 16.8 1.5 17.6 0.8 18.6" stroke="#1c1e21" stroke-width="1.4" fill="none" stroke-linecap="round"/><circle cx="6.3" cy="15.6" r="1.1" fill="#1c1e21"/><path d="M13.2 5.6 C15.4 7.6 16.2 10 16 13.4 L10.6 13.4 C10.2 12.8 10.3 12 10.9 11.6" stroke="#1c1e21" stroke-width="1.7" fill="none" stroke-linecap="round" stroke-linejoin="round"/></svg>
<div id="t77c8b910" class="t" style="top:678.72px;right:227.60px;font-size:21.6px;font-weight:normal;color:#1c1e21;transform:scaleX(0.9511);transform-origin:right">166,158</div>
<div id="t602aa49b" class="t" style="top:678.72px;right:27.00px;font-size:21.6px;font-weight:normal;color:#1c1e21;transform:scaleX(0.8993);transform-origin:right">86,010</div>
<div class="a" style="left:6px;top:738px;width:1490px;height:69px;background:#f5f6f7;border-radius:0px"></div>
<div class="a" style="left:79px;top:738px;width:1px;height:69px;background:#dadde1;border-radius:0px"></div>
<div class="a" style="left:208px;top:738px;width:1px;height:44px;background:#dadde1;border-radius:0px"></div>
<div class="a" style="left:555px;top:738px;width:1px;height:69px;background:#dadde1;border-radius:0px"></div>
<div class="a" style="left:719px;top:738px;width:1px;height:69px;background:#dadde1;border-radius:0px"></div>
<div class="a" style="left:896px;top:738px;width:1px;height:69px;background:#dadde1;border-radius:0px"></div>
<div class="a" style="left:1097px;top:738px;width:1px;height:69px;background:#dadde1;border-radius:0px"></div>
<div class="a" style="left:1289px;top:738px;width:1px;height:69px;background:#dadde1;border-radius:0px"></div>
<div class="a" style="left:1490px;top:738px;width:1px;height:69px;background:#dadde1;border-radius:0px"></div>
<div class="a" style="left:24.2px;top:755px;width:35.5px;height:35.5px;border-radius:8px;background:#fff;border:1px solid #cfcfcf"></div>
<div class="a" style="left:116px;top:744px;width:55.5px;height:31.5px;border-radius:16px;background:#dfe8f4;border:1px solid #c3cedb"></div>
<div class="a" style="left:141px;top:744.5px;width:30px;height:30px;border-radius:15px;background:#257cf0"></div>
<div id="t1e4572e0" class="t" style="top:747.72px;left:221.00px;font-size:21.6px;font-weight:normal;color:#1458c4;transform:scaleX(0.9515);transform-origin:left">BA /LG/ [LA] Society House 12.1…</div>
<div id="te5f1887b" class="t" style="top:747.72px;right:814.80px;font-size:21.6px;font-weight:normal;color:#1c1e21;transform:scaleX(0.9471);transform-origin:right">5,290.87</div>
<svg class="a" style="left:690.5px;top:749.0px" width="18" height="22" viewBox="0 0 18 22"><path d="M1.3 1.2 C1.1 3 1.6 8 2.4 13.6" stroke="#1c1e21" stroke-width="1.7" fill="none" stroke-linecap="round"/><path d="M2.6 15.6 C2.2 16.8 1.5 17.6 0.8 18.6" stroke="#1c1e21" stroke-width="1.4" fill="none" stroke-linecap="round"/><circle cx="6.3" cy="15.6" r="1.1" fill="#1c1e21"/><path d="M13.2 5.6 C15.4 7.6 16.2 10 16 13.4 L10.6 13.4 C10.2 12.8 10.3 12 10.9 11.6" stroke="#1c1e21" stroke-width="1.7" fill="none" stroke-linecap="round" stroke-linejoin="round"/></svg>
<div id="td9572715" class="t" style="top:747.72px;right:621.00px;font-size:21.6px;font-weight:normal;color:#1c1e21;transform:scaleX(0.9055);transform-origin:right">0.89%</div>
<div id="t72fa49ca" class="t" style="top:747.72px;right:436.70px;font-size:21.6px;font-weight:normal;color:#1c1e21;transform:scaleX(0.9515);transform-origin:right">34.54</div>
<svg class="a" style="left:1068.5px;top:749.0px" width="18" height="22" viewBox="0 0 18 22"><path d="M1.3 1.2 C1.1 3 1.6 8 2.4 13.6" stroke="#1c1e21" stroke-width="1.7" fill="none" stroke-linecap="round"/><path d="M2.6 15.6 C2.2 16.8 1.5 17.6 0.8 18.6" stroke="#1c1e21" stroke-width="1.4" fill="none" stroke-linecap="round"/><circle cx="6.3" cy="15.6" r="1.1" fill="#1c1e21"/><path d="M13.2 5.6 C15.4 7.6 16.2 10 16 13.4 L10.6 13.4 C10.2 12.8 10.3 12 10.9 11.6" stroke="#1c1e21" stroke-width="1.7" fill="none" stroke-linecap="round" stroke-linejoin="round"/></svg>
<div id="t76e7e1a4" class="t" style="top:747.72px;right:227.60px;font-size:21.6px;font-weight:normal;color:#1c1e21;transform:scaleX(0.9511);transform-origin:right">153,178</div>
<div id="t65329f90" class="t" style="top:747.72px;right:27.00px;font-size:21.6px;font-weight:normal;color:#1c1e21;transform:scaleX(0.8993);transform-origin:right">88,775</div>
<div class="a" style="left:6px;top:807px;width:1490px;height:69px;background:#ebf3fe;border-radius:0px"></div>
<div class="a" style="left:79px;top:807px;width:1px;height:69px;background:#dadde1;border-radius:0px"></div>
<div class="a" style="left:208px;top:807px;width:1px;height:44px;background:#dadde1;border-radius:0px"></div>
<div class="a" style="left:555px;top:807px;width:1px;height:69px;background:#dadde1;border-radius:0px"></div>
<div class="a" style="left:719px;top:807px;width:1px;height:69px;background:#dadde1;border-radius:0px"></div>
<div class="a" style="left:896px;top:807px;width:1px;height:69px;background:#dadde1;border-radius:0px"></div>
<div class="a" style="left:1097px;top:807px;width:1px;height:69px;background:#dadde1;border-radius:0px"></div>
<div class="a" style="left:1289px;top:807px;width:1px;height:69px;background:#dadde1;border-radius:0px"></div>
<div class="a" style="left:1490px;top:807px;width:1px;height:69px;background:#dadde1;border-radius:0px"></div>
<div class="a" style="left:24.2px;top:824px;width:35.5px;height:35.5px;border-radius:8px;background:#fff;border:1px solid #cfcfcf"></div>
<svg class="a" style="left:24.2px;top:824px" width="36" height="36" viewBox="0 0 36 36"><path d="M8.6 17.6 L14.8 23.4 L26.6 11.6" stroke="#1877f2" stroke-width="2.8" fill="none" stroke-linecap="round" stroke-linejoin="round"/></svg>
<div class="a" style="left:116px;top:813px;width:55.5px;height:31.5px;border-radius:16px;background:#fff;border:1px solid #d0d0d0"></div>
<div class="a" style="left:120px;top:817px;width:24px;height:24px;border-radius:12px;background:#3d3d3d"></div>
<div id="t1c3480b0" class="t" style="top:816.72px;left:221.00px;font-size:21.6px;font-weight:normal;color:#1458c4;transform:scaleX(0.9695);transform-origin:left">BA Society House /LG/ [LA]</div>
<div id="tf873881a" class="t" style="top:816.72px;right:814.80px;font-size:21.6px;font-weight:normal;color:#1c1e21;transform:scaleX(0.9359);transform-origin:right">4,850.35</div>
<svg class="a" style="left:690.5px;top:818.0px" width="18" height="22" viewBox="0 0 18 22"><path d="M1.3 1.2 C1.1 3 1.6 8 2.4 13.6" stroke="#1c1e21" stroke-width="1.7" fill="none" stroke-linecap="round"/><path d="M2.6 15.6 C2.2 16.8 1.5 17.6 0.8 18.6" stroke="#1c1e21" stroke-width="1.4" fill="none" stroke-linecap="round"/><circle cx="6.3" cy="15.6" r="1.1" fill="#1c1e21"/><path d="M13.2 5.6 C15.4 7.6 16.2 10 16 13.4 L10.6 13.4 C10.2 12.8 10.3 12 10.9 11.6" stroke="#1c1e21" stroke-width="1.7" fill="none" stroke-linecap="round" stroke-linejoin="round"/></svg>
<div id="t228f545e" class="t" style="top:816.72px;right:621.00px;font-size:21.6px;font-weight:normal;color:#1c1e21;transform:scaleX(0.9055);transform-origin:right">0.34%</div>
<div id="tfdf7f949" class="t" style="top:816.72px;right:436.70px;font-size:21.6px;font-weight:normal;color:#1c1e21;transform:scaleX(0.9515);transform-origin:right">70.74</div>
<svg class="a" style="left:1068.5px;top:818.0px" width="18" height="22" viewBox="0 0 18 22"><path d="M1.3 1.2 C1.1 3 1.6 8 2.4 13.6" stroke="#1c1e21" stroke-width="1.7" fill="none" stroke-linecap="round"/><path d="M2.6 15.6 C2.2 16.8 1.5 17.6 0.8 18.6" stroke="#1c1e21" stroke-width="1.4" fill="none" stroke-linecap="round"/><circle cx="6.3" cy="15.6" r="1.1" fill="#1c1e21"/><path d="M13.2 5.6 C15.4 7.6 16.2 10 16 13.4 L10.6 13.4 C10.2 12.8 10.3 12 10.9 11.6" stroke="#1c1e21" stroke-width="1.7" fill="none" stroke-linecap="round" stroke-linejoin="round"/></svg>
<div id="te0acea8e" class="t" style="top:816.72px;right:227.60px;font-size:21.6px;font-weight:normal;color:#1c1e21;transform:scaleX(0.9561);transform-origin:right">68,567</div>
<div id="tf5833252" class="t" style="top:816.72px;right:27.00px;font-size:21.6px;font-weight:normal;color:#1c1e21;transform:scaleX(0.9401);transform-origin:right">32,670</div>
<div class="a" style="left:6px;top:876px;width:1490px;height:69px;background:#f5f6f7;border-radius:0px"></div>
<div class="a" style="left:79px;top:876px;width:1px;height:69px;background:#dadde1;border-radius:0px"></div>
<div class="a" style="left:208px;top:876px;width:1px;height:44px;background:#dadde1;border-radius:0px"></div>
<div class="a" style="left:555px;top:876px;width:1px;height:69px;background:#dadde1;border-radius:0px"></div>
<div class="a" style="left:719px;top:876px;width:1px;height:69px;background:#dadde1;border-radius:0px"></div>
<div class="a" style="left:896px;top:876px;width:1px;height:69px;background:#dadde1;border-radius:0px"></div>
<div class="a" style="left:1097px;top:876px;width:1px;height:69px;background:#dadde1;border-radius:0px"></div>
<div class="a" style="left:1289px;top:876px;width:1px;height:69px;background:#dadde1;border-radius:0px"></div>
<div class="a" style="left:1490px;top:876px;width:1px;height:69px;background:#dadde1;border-radius:0px"></div>
<div class="a" style="left:24.2px;top:893px;width:35.5px;height:35.5px;border-radius:8px;background:#fff;border:1px solid #cfcfcf"></div>
<div class="a" style="left:116px;top:882px;width:55.5px;height:31.5px;border-radius:16px;background:#fff;border:1px solid #d0d0d0"></div>
<div class="a" style="left:120px;top:886px;width:24px;height:24px;border-radius:12px;background:#3d3d3d"></div>
<div id="tdbfe7e0e" class="t" style="top:885.72px;left:221.00px;font-size:21.6px;font-weight:normal;color:#1458c4;transform:scaleX(0.9303);transform-origin:left">BA (SA) Dubai Islands EU [18Au…</div>
<div id="te1b891c6" class="t" style="top:885.72px;right:814.80px;font-size:21.6px;font-weight:normal;color:#1c1e21;transform:scaleX(0.9471);transform-origin:right">2,821.82</div>
<svg class="a" style="left:690.5px;top:887.0px" width="18" height="22" viewBox="0 0 18 22"><path d="M1.3 1.2 C1.1 3 1.6 8 2.4 13.6" stroke="#1c1e21" stroke-width="1.7" fill="none" stroke-linecap="round"/><path d="M2.6 15.6 C2.2 16.8 1.5 17.6 0.8 18.6" stroke="#1c1e21" stroke-width="1.4" fill="none" stroke-linecap="round"/><circle cx="6.3" cy="15.6" r="1.1" fill="#1c1e21"/><path d="M13.2 5.6 C15.4 7.6 16.2 10 16 13.4 L10.6 13.4 C10.2 12.8 10.3 12 10.9 11.6" stroke="#1c1e21" stroke-width="1.7" fill="none" stroke-linecap="round" stroke-linejoin="round"/></svg>
<div id="t7096b5db" class="t" style="top:885.72px;right:621.00px;font-size:21.6px;font-weight:normal;color:#1c1e21;transform:scaleX(0.9055);transform-origin:right">0.65%</div>
<div id="t97d4eabf" class="t" style="top:885.72px;right:436.70px;font-size:21.6px;font-weight:normal;color:#1c1e21;transform:scaleX(0.9702);transform-origin:right">17.50</div>
<svg class="a" style="left:1068.5px;top:887.0px" width="18" height="22" viewBox="0 0 18 22"><path d="M1.3 1.2 C1.1 3 1.6 8 2.4 13.6" stroke="#1c1e21" stroke-width="1.7" fill="none" stroke-linecap="round"/><path d="M2.6 15.6 C2.2 16.8 1.5 17.6 0.8 18.6" stroke="#1c1e21" stroke-width="1.4" fill="none" stroke-linecap="round"/><circle cx="6.3" cy="15.6" r="1.1" fill="#1c1e21"/><path d="M13.2 5.6 C15.4 7.6 16.2 10 16 13.4 L10.6 13.4 C10.2 12.8 10.3 12 10.9 11.6" stroke="#1c1e21" stroke-width="1.7" fill="none" stroke-linecap="round" stroke-linejoin="round"/></svg>
<div id="tf5b065d1" class="t" style="top:885.72px;right:227.60px;font-size:21.6px;font-weight:normal;color:#1c1e21;transform:scaleX(0.9511);transform-origin:right">161,254</div>
<div id="tddef9a7d" class="t" style="top:885.72px;right:27.00px;font-size:21.6px;font-weight:normal;color:#1c1e21;transform:scaleX(0.9401);transform-origin:right">86,516</div>
<div class="a" style="left:6px;top:945px;width:1490px;height:69px;background:#ffffff;border-radius:0px"></div>
<div class="a" style="left:79px;top:945px;width:1px;height:69px;background:#dadde1;border-radius:0px"></div>
<div class="a" style="left:208px;top:945px;width:1px;height:44px;background:#dadde1;border-radius:0px"></div>
<div class="a" style="left:555px;top:945px;width:1px;height:69px;background:#dadde1;border-radius:0px"></div>
<div class="a" style="left:719px;top:945px;width:1px;height:69px;background:#dadde1;border-radius:0px"></div>
<div class="a" style="left:896px;top:945px;width:1px;height:69px;background:#dadde1;border-radius:0px"></div>
<div class="a" style="left:1097px;top:945px;width:1px;height:69px;background:#dadde1;border-radius:0px"></div>
<div class="a" style="left:1289px;top:945px;width:1px;height:69px;background:#dadde1;border-radius:0px"></div>
<div class="a" style="left:1490px;top:945px;width:1px;height:69px;background:#dadde1;border-radius:0px"></div>
<div class="a" style="left:24.2px;top:962px;width:35.5px;height:35.5px;border-radius:8px;background:#fff;border:1px solid #cfcfcf"></div>
<div class="a" style="left:116px;top:951px;width:55.5px;height:31.5px;border-radius:16px;background:#fff;border:1px solid #d0d0d0"></div>
<div class="a" style="left:120px;top:955px;width:24px;height:24px;border-radius:12px;background:#3d3d3d"></div>
<div id="t9a3eb96a" class="t" style="top:954.72px;left:221.00px;font-size:21.6px;font-weight:normal;color:#1458c4;transform:scaleX(0.9372);transform-origin:left">BA LA Downtown-Dubai-EU [20J…</div>
<div id="t2dc801e7" class="t" style="top:954.72px;right:814.80px;font-size:21.6px;font-weight:normal;color:#1c1e21;transform:scaleX(0.9471);transform-origin:right">1,612.24</div>
<svg class="a" style="left:690.5px;top:956.0px" width="18" height="22" viewBox="0 0 18 22"><path d="M1.3 1.2 C1.1 3 1.6 8 2.4 13.6" stroke="#1c1e21" stroke-width="1.7" fill="none" stroke-linecap="round"/><path d="M2.6 15.6 C2.2 16.8 1.5 17.6 0.8 18.6" stroke="#1c1e21" stroke-width="1.4" fill="none" stroke-linecap="round"/><circle cx="6.3" cy="15.6" r="1.1" fill="#1c1e21"/><path d="M13.2 5.6 C15.4 7.6 16.2 10 16 13.4 L10.6 13.4 C10.2 12.8 10.3 12 10.9 11.6" stroke="#1c1e21" stroke-width="1.7" fill="none" stroke-linecap="round" stroke-linejoin="round"/></svg>
<div id="t11d33791" class="t" style="top:954.72px;right:621.00px;font-size:21.6px;font-weight:normal;color:#1c1e21;transform:scaleX(0.9055);transform-origin:right">0.74%</div>
<div id="td6115ada" class="t" style="top:954.72px;right:436.70px;font-size:21.6px;font-weight:normal;color:#1c1e21;transform:scaleX(0.9702);transform-origin:right">19.03</div>
<svg class="a" style="left:1068.5px;top:956.0px" width="18" height="22" viewBox="0 0 18 22"><path d="M1.3 1.2 C1.1 3 1.6 8 2.4 13.6" stroke="#1c1e21" stroke-width="1.7" fill="none" stroke-linecap="round"/><path d="M2.6 15.6 C2.2 16.8 1.5 17.6 0.8 18.6" stroke="#1c1e21" stroke-width="1.4" fill="none" stroke-linecap="round"/><circle cx="6.3" cy="15.6" r="1.1" fill="#1c1e21"/><path d="M13.2 5.6 C15.4 7.6 16.2 10 16 13.4 L10.6 13.4 C10.2 12.8 10.3 12 10.9 11.6" stroke="#1c1e21" stroke-width="1.7" fill="none" stroke-linecap="round" stroke-linejoin="round"/></svg>
<div id="t633264e5" class="t" style="top:954.72px;right:227.60px;font-size:21.6px;font-weight:normal;color:#1c1e21;transform:scaleX(0.9392);transform-origin:right">84,719</div>
<div id="tf05711c0" class="t" style="top:954.72px;right:27.00px;font-size:21.6px;font-weight:normal;color:#1c1e21;transform:scaleX(0.9250);transform-origin:right">48,822</div>
<div class="a" style="left:6px;top:1014px;width:1490px;height:69px;background:#f5f6f7;border-radius:0px"></div>
<div class="a" style="left:79px;top:1014px;width:1px;height:69px;background:#dadde1;border-radius:0px"></div>
<div class="a" style="left:208px;top:1014px;width:1px;height:44px;background:#dadde1;border-radius:0px"></div>
<div class="a" style="left:555px;top:1014px;width:1px;height:69px;background:#dadde1;border-radius:0px"></div>
<div class="a" style="left:719px;top:1014px;width:1px;height:69px;background:#dadde1;border-radius:0px"></div>
<div class="a" style="left:896px;top:1014px;width:1px;height:69px;background:#dadde1;border-radius:0px"></div>
<div class="a" style="left:1097px;top:1014px;width:1px;height:69px;background:#dadde1;border-radius:0px"></div>
<div class="a" style="left:1289px;top:1014px;width:1px;height:69px;background:#dadde1;border-radius:0px"></div>
<div class="a" style="left:1490px;top:1014px;width:1px;height:69px;background:#dadde1;border-radius:0px"></div>
<div class="a" style="left:24.2px;top:1031px;width:35.5px;height:35.5px;border-radius:8px;background:#fff;border:1px solid #cfcfcf"></div>
<div class="a" style="left:116px;top:1020px;width:55.5px;height:31.5px;border-radius:16px;background:#fff;border:1px solid #d0d0d0"></div>
<div class="a" style="left:120px;top:1024px;width:24px;height:24px;border-radius:12px;background:#3d3d3d"></div>
<div id="t03c02036" class="t" style="top:1023.72px;left:221.00px;font-size:21.6px;font-weight:normal;color:#1458c4;transform:scaleX(0.9452);transform-origin:left">BA Local Event</div>
<div id="tdb596010" class="t" style="top:1023.72px;right:814.80px;font-size:21.6px;font-weight:normal;color:#1c1e21;transform:scaleX(0.9474);transform-origin:right">1,103.27</div>
<svg class="a" style="left:690.5px;top:1025.0px" width="18" height="22" viewBox="0 0 18 22"><path d="M1.3 1.2 C1.1 3 1.6 8 2.4 13.6" stroke="#1c1e21" stroke-width="1.7" fill="none" stroke-linecap="round"/><path d="M2.6 15.6 C2.2 16.8 1.5 17.6 0.8 18.6" stroke="#1c1e21" stroke-width="1.4" fill="none" stroke-linecap="round"/><circle cx="6.3" cy="15.6" r="1.1" fill="#1c1e21"/><path d="M13.2 5.6 C15.4 7.6 16.2 10 16 13.4 L10.6 13.4 C10.2 12.8 10.3 12 10.9 11.6" stroke="#1c1e21" stroke-width="1.7" fill="none" stroke-linecap="round" stroke-linejoin="round"/></svg>
<div id="te57cdb59" class="t" style="top:1023.72px;right:621.00px;font-size:21.6px;font-weight:normal;color:#1c1e21;transform:scaleX(0.9055);transform-origin:right">0.51%</div>
<div id="t71cd2fbc" class="t" style="top:1023.72px;right:436.70px;font-size:21.6px;font-weight:normal;color:#1c1e21;transform:scaleX(0.9713);transform-origin:right">83.82</div>
<svg class="a" style="left:1068.5px;top:1025.0px" width="18" height="22" viewBox="0 0 18 22"><path d="M1.3 1.2 C1.1 3 1.6 8 2.4 13.6" stroke="#1c1e21" stroke-width="1.7" fill="none" stroke-linecap="round"/><path d="M2.6 15.6 C2.2 16.8 1.5 17.6 0.8 18.6" stroke="#1c1e21" stroke-width="1.4" fill="none" stroke-linecap="round"/><circle cx="6.3" cy="15.6" r="1.1" fill="#1c1e21"/><path d="M13.2 5.6 C15.4 7.6 16.2 10 16 13.4 L10.6 13.4 C10.2 12.8 10.3 12 10.9 11.6" stroke="#1c1e21" stroke-width="1.7" fill="none" stroke-linecap="round" stroke-linejoin="round"/></svg>
<div id="t08385476" class="t" style="top:1023.72px;right:227.60px;font-size:21.6px;font-weight:normal;color:#1c1e21;transform:scaleX(0.9392);transform-origin:right">13,163</div>
<div id="ted880985" class="t" style="top:1023.72px;right:27.00px;font-size:21.6px;font-weight:normal;color:#1c1e21;transform:scaleX(0.9304);transform-origin:right">9,561</div>
<div class="a" style="left:1479px;top:399px;width:10.5px;height:355px;background:#c1c1c1;border-radius:5px"></div>
<div class="a" style="left:6px;top:1077px;width:1490px;height:6px;background:linear-gradient(rgba(0,0,0,0),rgba(0,0,0,0.1));border-radius:0px"></div>
<div class="a" style="left:6px;top:1083px;width:1490px;height:97px;background:#fff;border-radius:0px"></div>
<div class="a" style="left:6px;top:1178px;width:1490px;height:1px;background:#e0e0e0;border-radius:0px"></div>
<div class="a" style="left:208px;top:1083px;width:1px;height:95px;background:#dadde1;border-radius:0px"></div>
<div class="a" style="left:555px;top:1083px;width:1px;height:95px;background:#dadde1;border-radius:0px"></div>
<div class="a" style="left:719px;top:1083px;width:1px;height:95px;background:#dadde1;border-radius:0px"></div>
<div class="a" style="left:896px;top:1083px;width:1px;height:95px;background:#dadde1;border-radius:0px"></div>
<div class="a" style="left:1097px;top:1083px;width:1px;height:95px;background:#dadde1;border-radius:0px"></div>
<div class="a" style="left:1289px;top:1083px;width:1px;height:95px;background:#dadde1;border-radius:0px"></div>
<div class="a" style="left:1490px;top:1083px;width:1px;height:95px;background:#dadde1;border-radius:0px"></div>
<div id="tf793c292" class="t" style="top:1098.80px;left:227.50px;font-size:21.5px;font-weight:bold;color:#1c1e21;transform:scaleX(0.9248);transform-origin:left">Results from 32 campaigns</div>
<svg class="a" style="left:492px;top:1099px" width="18" height="18" viewBox="0 0 18 18"><circle cx="9" cy="8.8" r="8.9" fill="#444"/><circle cx="9.1" cy="4.5" r="1.3" fill="#fff"/><path d="M7.6 7.4 H9.9 V13.4" stroke="#fff" stroke-width="2" fill="none" stroke-linejoin="round"/></svg>
<div id="t07f91871" class="t" style="top:1097.22px;right:814.00px;font-size:21.6px;font-weight:bold;color:#1c1e21;transform:scaleX(0.9669);transform-origin:right">69,996.48</div>
<svg class="a" style="left:691.5px;top:1098.5px" width="18" height="22" viewBox="0 0 18 22"><path d="M1.3 1.2 C1.1 3 1.6 8 2.4 13.6" stroke="#1c1e21" stroke-width="2.1" fill="none" stroke-linecap="round"/><path d="M2.6 15.6 C2.2 16.8 1.5 17.6 0.8 18.6" stroke="#1c1e21" stroke-width="1.7" fill="none" stroke-linecap="round"/><circle cx="6.3" cy="15.6" r="1.3" fill="#1c1e21"/><path d="M13.2 5.6 C15.4 7.6 16.2 10 16 13.4 L10.6 13.4 C10.2 12.8 10.3 12 10.9 11.6" stroke="#1c1e21" stroke-width="2.1" fill="none" stroke-linecap="round" stroke-linejoin="round"/></svg>
<div id="t507afba4" class="t" style="top:1129.54px;right:794.80px;font-size:18.5px;font-weight:normal;color:#7b7b7b;transform:scaleX(0.9632);transform-origin:right">Total Spent</div>
<div id="t6ce8b835" class="t" style="top:1097.22px;right:618.50px;font-size:21.6px;font-weight:bold;color:#1c1e21;transform:scaleX(0.9176);transform-origin:right">0.87%</div>
<div id="tc6e78530" class="t" style="top:1129.54px;right:618.50px;font-size:18.5px;font-weight:normal;color:#7b7b7b;transform:scaleX(0.9698);transform-origin:right">Per Impressions</div>
<div id="ta819e936" class="t" style="top:1097.22px;right:434.00px;font-size:21.6px;font-weight:bold;color:#1c1e21">27.69</div>
<svg class="a" style="left:1071.0px;top:1098.5px" width="18" height="22" viewBox="0 0 18 22"><path d="M1.3 1.2 C1.1 3 1.6 8 2.4 13.6" stroke="#1c1e21" stroke-width="2.1" fill="none" stroke-linecap="round"/><path d="M2.6 15.6 C2.2 16.8 1.5 17.6 0.8 18.6" stroke="#1c1e21" stroke-width="1.7" fill="none" stroke-linecap="round"/><circle cx="6.3" cy="15.6" r="1.3" fill="#1c1e21"/><path d="M13.2 5.6 C15.4 7.6 16.2 10 16 13.4 L10.6 13.4 C10.2 12.8 10.3 12 10.9 11.6" stroke="#1c1e21" stroke-width="2.1" fill="none" stroke-linecap="round" stroke-linejoin="round"/></svg>
<div id="t70f7b90c" class="t" style="top:1129.54px;right:421.50px;font-size:18.5px;font-weight:normal;color:#7b7b7b;transform:scaleX(0.9405);transform-origin:right">Per 1,000 Impressio…</div>
<div id="t1971ead0" class="t" style="top:1097.22px;right:226.00px;font-size:21.6px;font-weight:bold;color:#1c1e21;transform:scaleX(0.9583);transform-origin:right">2,528,171</div>
<div id="t096d7e8a" class="t" style="top:1129.54px;right:226.00px;font-size:18.5px;font-weight:normal;color:#7b7b7b;transform:scaleX(0.9737);transform-origin:right">Total</div>
<div id="t2cf2b444" class="t" style="top:1097.22px;right:23.50px;font-size:21.6px;font-weight:bold;color:#1c1e21;transform:scaleX(0.9875);transform-origin:right">830,619</div>
<svg class="a" style="left:1403px;top:1116px" width="80" height="4"><path d="M1 2 H79" stroke="#1c1e21" stroke-width="2" stroke-dasharray="2 2.1"/></svg>
<div id="tbfafcbce" class="t" style="top:1129.54px;right:30.50px;font-size:18.5px;font-weight:normal;color:#7b7b7b;transform:scaleX(0.9438);transform-origin:right">Accounts Center ac…</div>
<div class="a" style="left:567px;top:1083.4px;width:152px;height:88.4px;border:4px solid #fc2a1f"></div>
</body></html>
